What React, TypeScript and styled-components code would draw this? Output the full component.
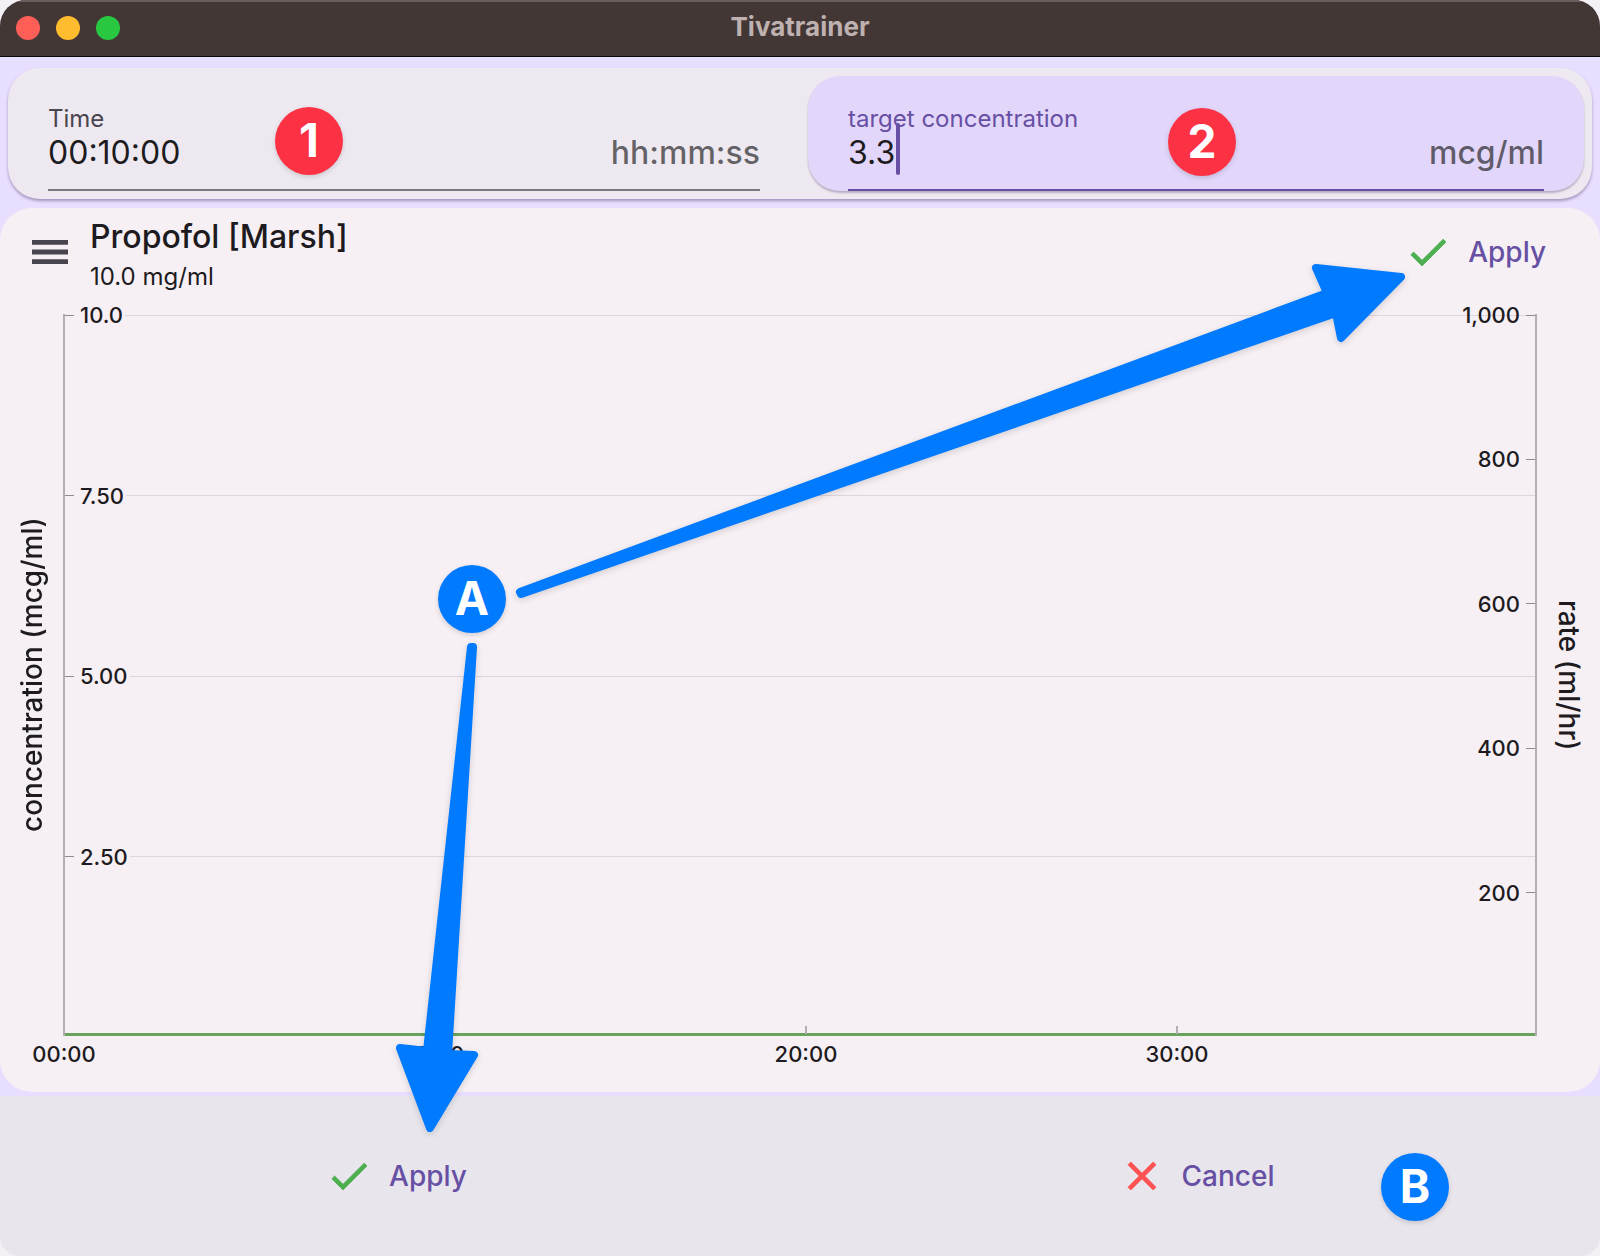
import React from "react";
import styled, { createGlobalStyle } from "styled-components";

const ink = "#1d1b20";
const muted = "#49454f";
const accent = "#6750a4";
const axis = "#b3aeb4";

const GlobalStyle = createGlobalStyle`
  *, *::before, *::after { box-sizing: border-box; }
  body { margin: 0; background: #f4f1f5; font-family: Inter, "Liberation Sans", sans-serif; color: ${ink}; }
  button, input { font: inherit; color: inherit; }
`;

const Window = styled.div`
  position: relative;
  display: flex;
  flex-direction: column;
  min-height: 100vh;
  background: #e8deff;
  border-radius: 26px 26px 20px 20px;
  overflow: hidden;
`;

const TitleBar = styled.header`
  display: grid;
  grid-template-columns: 1fr auto 1fr;
  align-items: center;
  height: 57px;
  padding: 0 16px 2px;
  background: #433736;
  border-top: 2px solid #685d5c;
  border-bottom: 1px solid #0c0808;
`;

const Lights = styled.div`
  display: flex;
  gap: 16px;
`;

const Light = styled.button<{ $color: string }>`
  width: 24px;
  height: 24px;
  padding: 0;
  border: 0;
  border-radius: 50%;
  background: ${(p) => p.$color};
`;

const WindowTitle = styled.h1`
  margin: 0;
  padding-bottom: 2px;
  font-size: 26px;
  line-height: 32px;
  font-weight: 700;
  color: #bfb1af;
`;

const Fields = styled.section`
  display: grid;
  grid-template-columns: 1fr 1fr;
  gap: 16px;
  margin: 11px 8px 9px;
  padding: 8px;
  border-radius: 32px;
  background: #eee9f0;
  box-shadow: 0 2px 3px rgba(60, 40, 90, 0.4);
`;

const FieldCard = styled.div<{ $active?: boolean }>`
  display: flex;
  height: 115px;
  padding: 0 ${(p) => (p.$active ? 40 : 32)}px;
  border-radius: 32px;
  background: ${(p) => (p.$active ? "#e2d6fa" : "transparent")};
  box-shadow: ${(p) => (p.$active ? "0 2px 2px rgba(60, 40, 90, 0.3)" : "none")};
`;

const FieldBody = styled.div<{ $active?: boolean }>`
  display: grid;
  grid-template-columns: 1fr auto;
  grid-template-rows: 32px 36px;
  align-content: start;
  flex: 1;
  padding-top: 27px;
  border-bottom: 2px solid ${(p) => (p.$active ? accent : "#7d7880")};
`;

const FieldLabel = styled.label<{ $active?: boolean }>`
  grid-column: 1 / -1;
  font-size: 24px;
  line-height: 32px;
  color: ${(p) => (p.$active ? accent : muted)};
`;

const FieldValue = styled.div`
  position: relative;
  display: flex;
`;

const FieldInput = styled.input`
  width: 100%;
  height: 36px;
  padding: 0;
  border: 0;
  outline: 0;
  background: transparent;
  font-size: 32px;
  line-height: 36px;
`;

const Caret = styled.span`
  position: absolute;
  left: 48px;
  top: -12px;
  width: 4px;
  height: 52px;
  border-radius: 2px;
  background: ${accent};
`;

const Unit = styled.span`
  font-size: 32px;
  line-height: 36px;
  font-weight: 500;
  color: rgba(29, 27, 32, 0.66);
`;

const Panel = styled.main`
  display: flex;
  flex-direction: column;
  flex: 1;
  margin-bottom: 4px;
  border-radius: 32px;
  background: #f6f0f5;
`;

const PanelHeader = styled.div`
  display: flex;
  align-items: center;
  height: 88px;
  padding: 0 22px;
`;

const IconButton = styled.button`
  display: flex;
  padding: 4px;
  border: 0;
  background: none;
  color: ${muted};
`;

const DrugText = styled.div`
  flex: 1;
  padding: 6px 0 0 12px;
`;

const DrugName = styled.h2`
  margin: 0;
  font-size: 32px;
  line-height: 44px;
  font-weight: 500;
`;

const DrugStrength = styled.p`
  margin: 0;
  font-size: 24px;
  line-height: 36px;
`;

const TextButton = styled.button`
  display: flex;
  align-items: center;
  gap: 16px;
  padding: 0 32px 0 24px;
  border: 0;
  background: none;
  font-size: 28px;
  line-height: 48px;
  font-weight: 500;
  color: ${accent};
`;

const ChartRow = styled.div`
  display: grid;
  grid-template-columns: 63px 1fr 63px;
  flex: 1;
  padding-top: 18px;
`;

const AxisTitle = styled.div<{ $flip?: boolean }>`
  display: flex;
  align-items: center;
  justify-content: center;
  writing-mode: vertical-rl;
  transform: ${(p) => (p.$flip ? "rotate(180deg)" : "none")};
  font-size: 28px;
  line-height: 36px;
  font-weight: 500;
`;

const Plot = styled.div`
  display: grid;
  border: solid ${axis};
  border-width: 0 2px;
  background: linear-gradient(#68a35c, #68a35c) bottom / 100% 3px no-repeat;
`;

const Scale = styled.div`
  grid-area: 1 / 1;
  display: flex;
  flex-direction: column;
`;

const Band = styled.div<{ $side: "left" | "right" }>`
  display: flex;
  flex: 1 1 0;
  align-items: flex-start;
  justify-content: ${(p) => (p.$side === "left" ? "flex-start" : "flex-end")};
`;

const GridLabel = styled.div<{ $side: "left" | "right" }>`
  display: flex;
  flex: ${(p) => (p.$side === "left" ? "1" : "none")};
  flex-direction: ${(p) => (p.$side === "left" ? "row" : "row-reverse")};
  align-items: center;
  gap: 6px;
  height: 28px;
  margin-top: -13px;
  font-size: 22px;
  line-height: 28px;
  font-weight: 500;

  &::before {
    content: "";
    width: 9px;
    height: 1px;
    background: #8f8a90;
  }
  &::after {
    content: "";
    display: ${(p) => (p.$side === "left" ? "block" : "none")};
    flex: 1;
    height: 1px;
    margin-left: -4px;
    background: #dcd7dc;
  }
`;

const TimeAxis = styled.div`
  display: grid;
  grid-template-columns: repeat(3, 371fr) 359fr;
  height: 66px;
  margin: -10px 64px 0;
`;

const TimeTick = styled.div`
  display: flex;
  flex-direction: column;
  align-items: center;
  justify-self: start;
  width: 80px;
  margin-left: -40px;
  gap: 6px;
  font-size: 22px;
  line-height: 28px;
  font-weight: 500;

  &::before {
    content: "";
    width: 2px;
    height: 8px;
    background: ${axis};
  }
`;

const ActionBar = styled.footer`
  display: grid;
  grid-template-columns: 1fr 1fr;
  align-items: center;
  justify-items: center;
  height: 160px;
  background: #e8e5ec;
`;

const Annotations = styled.div`
  position: absolute;
  inset: 0;
  pointer-events: none;
`;

const Arrows = styled.svg`
  width: 100%;
  height: 100%;
  filter: drop-shadow(0 2px 3px rgba(0, 0, 0, 0.15));
`;

const Badge = styled.span<{ $x: number; $y: number; $color: string }>`
  position: absolute;
  left: ${(p) => p.$x}px;
  top: ${(p) => p.$y}px;
  width: 68px;
  height: 68px;
  border-radius: 50%;
  background: ${(p) => p.$color};
  box-shadow: 0 2px 5px rgba(0, 0, 0, 0.15);
  color: #fff;
  font-size: 46px;
  line-height: 66px;
  font-weight: 700;
  text-align: center;
`;

const CheckIcon = () => (
  <svg width="48" height="48" viewBox="0 0 24 24" fill="#4caf50" stroke="#4caf50" strokeWidth="0.4" aria-hidden="true">
    <path d="M9 16.17 4.83 12l-1.42 1.41L9 19 21 7l-1.41-1.41z" />
  </svg>
);

const CloseIcon = () => (
  <svg width="48" height="48" viewBox="0 0 24 24" fill="#ff5252" stroke="#ff5252" strokeWidth="0.4" aria-hidden="true">
    <path d="M19 6.41 17.59 5 12 10.59 6.41 5 5 6.41 10.59 12 5 17.59 6.41 19 12 13.41 17.59 19 19 17.59 13.41 12z" />
  </svg>
);

const MenuIcon = () => (
  <svg width="48" height="48" viewBox="0 0 24 24" fill="currentColor" aria-hidden="true">
    <path d="M3 18h18v-2.400H3zM3 13.200h18v-2.400H3zM3 6v2.400h18V6z" />
  </svg>
);

const concentrations = ["10.0", "7.50", "5.00", "2.50"];
const rates = ["1,000", "800", "600", "400", "200"];
const times = ["00:00", "10:00", "20:00", "30:00"];

export default function App() {
  return (
    <>
      <GlobalStyle />
      <Window>
        <TitleBar>
          <Lights>
            <Light $color="#ff5f57" aria-label="Close" />
            <Light $color="#febc2e" aria-label="Minimize" />
            <Light $color="#28c840" aria-label="Zoom" />
          </Lights>
          <WindowTitle>Tivatrainer</WindowTitle>
        </TitleBar>

        <Fields>
          <FieldCard>
            <FieldBody>
              <FieldLabel htmlFor="time">Time</FieldLabel>
              <FieldValue>
                <FieldInput id="time" defaultValue="00:10:00" />
              </FieldValue>
              <Unit>hh:mm:ss</Unit>
            </FieldBody>
          </FieldCard>
          <FieldCard $active>
            <FieldBody $active>
              <FieldLabel $active htmlFor="target">target concentration</FieldLabel>
              <FieldValue>
                <FieldInput id="target" defaultValue="3.3" />
                <Caret />
              </FieldValue>
              <Unit>mcg/ml</Unit>
            </FieldBody>
          </FieldCard>
        </Fields>

        <Panel>
          <PanelHeader>
            <IconButton aria-label="Menu">
              <MenuIcon />
            </IconButton>
            <DrugText>
              <DrugName>Propofol [Marsh]</DrugName>
              <DrugStrength>10.0 mg/ml</DrugStrength>
            </DrugText>
            <TextButton>
              <CheckIcon />
              Apply
            </TextButton>
          </PanelHeader>

          <ChartRow>
            <AxisTitle $flip>concentration (mcg/ml)</AxisTitle>
            <Plot>
              <Scale>
                {concentrations.map((c) => (
                  <Band key={c} $side="left">
                    <GridLabel $side="left">{c}</GridLabel>
                  </Band>
                ))}
              </Scale>
              <Scale>
                {rates.map((r) => (
                  <Band key={r} $side="right">
                    <GridLabel $side="right">{r}</GridLabel>
                  </Band>
                ))}
              </Scale>
            </Plot>
            <AxisTitle>rate (ml/hr)</AxisTitle>
          </ChartRow>
          <TimeAxis>
            {times.map((t) => (
              <TimeTick key={t}>{t}</TimeTick>
            ))}
          </TimeAxis>
        </Panel>

        <ActionBar>
          <TextButton>
            <CheckIcon />
            Apply
          </TextButton>
          <TextButton>
            <CloseIcon />
            Cancel
          </TextButton>
        </ActionBar>

        <Annotations>
          <Arrows viewBox="0 0 1600 1256" fill="#007aff" stroke="#007aff" strokeWidth="8" strokeLinejoin="round">
            <path d="M520 592 L1327 293 L1316 268 L1401 277 L1341 338 L1336 313 L521 594 Z" />
            <path d="M471 647 L427 1051 L400 1048 L430 1128 L474 1055 L448 1054 L473 647 Z" />
          </Arrows>
          <Badge $x={275} $y={107} $color="#fc3244">1</Badge>
          <Badge $x={1168} $y={108} $color="#fc3244">2</Badge>
          <Badge $x={438} $y={565} $color="#007aff">A</Badge>
          <Badge $x={1381} $y={1153} $color="#007aff">B</Badge>
        </Annotations>
      </Window>
    </>
  );
}
